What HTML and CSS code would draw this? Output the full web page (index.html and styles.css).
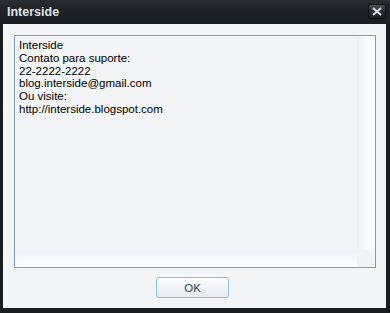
FILE: index.html
```html
<!DOCTYPE html>
<html>
<head>
<meta charset="utf-8">
<link rel="stylesheet" href="styles.css">
</head>
<body>
<div class="window">
  <div class="titlebar">
    <span class="title">Interside</span>
    <button class="close" aria-label="Fechar">
      <svg width="10" height="9" viewBox="0 0 10 9"><path d="M1 1 L9 8 M9 1 L1 8" stroke="#d8dde2" stroke-width="2"/></svg>
    </button>
  </div>
  <div class="content">
    <div class="textbox">
      <div class="text-area">
        <div class="text">Interside<br>Contato para suporte:<br>22-2222-2222<br>blog.interside@gmail.com<br>Ou visite:<br>http://interside.blogspot.com</div>
        <div class="vscroll"></div>
      </div>
      <div class="hrow">
        <div class="hscroll"></div>
        <div class="corner"></div>
      </div>
    </div>
    <div class="actions">
      <button class="ok">OK</button>
    </div>
  </div>
</div>
</body>
</html>
```
FILE: styles.css
```css
* { box-sizing: border-box; }
html, body { margin: 0; padding: 0; }
body { width: 390px; height: 313px; overflow: hidden; background: #1c1f22; }
.window {
  width: 390px; height: 313px;
  display: flex; flex-direction: column;
  background: #1a1d20;
  padding: 0 4px 5px 3px;
  font-family: "Liberation Sans", sans-serif;
}
.titlebar {
  height: 24px; flex: none;
  display: flex; align-items: center; justify-content: space-between;
  background: linear-gradient(#2a2e33, #1e2226 40%, #1b1e21);
  margin: 0 -4px 0 -3px;
  padding: 0 4px 0 7px;
}
.title {
  color: #dfe3e8; font-weight: bold; font-size: 12.5px;
  font-family: "Liberation Sans", sans-serif;
  margin-top: -1px;
}
.close {
  width: 18px; height: 15px; margin: -1px 0 0 0; padding: 0;
  border: 1px solid #0e1012; border-radius: 2px;
  background: linear-gradient(#4a5056, #2a2e33 50%, #1a1d20);
  display: flex; align-items: center; justify-content: center;
}
.content {
  flex: 1;
  background: #f3f4f6;
  padding: 11px 10px 10px 11px;
  display: flex; flex-direction: column;
}
.textbox {
  height: 233px;
  border: 1px solid #7e9cbd;
  background: #f2f4f6;
  display: flex; flex-direction: column;
}
.text-area { flex: 1; display: flex; }
.text {
  flex: 1;
  padding: 3px 4px;
  font-family: "Liberation Sans", Arial, sans-serif;
  font-size: 11.5px; line-height: 12.8px; color: #000;
}
.vscroll {
  width: 17px;
  margin-right: 1px;
  background: linear-gradient(90deg, #eef1f4, #f8f9fb 60%, #fbfcfd);
}
.hrow { height: 17px; display: flex; }
.hscroll { flex: 1; background: linear-gradient(#eceff3, #f6f8fa 50%, #fcfdfe); }
.corner { width: 18px; background: #f1f3f5; }
.actions {
  flex: 1;
  display: flex; justify-content: center; align-items: flex-end;
  padding-right: 5px;
}
.ok {
  width: 73px; height: 21px;
  border: 1px solid #86c1ee; border-radius: 3px;
  background: linear-gradient(#fbfcfd, #eef1f4 60%, #e7ebef);
  font-family: "Liberation Sans", Arial, sans-serif;
  font-size: 11.5px; color: #1d3e62;
  padding: 0;
}
```
